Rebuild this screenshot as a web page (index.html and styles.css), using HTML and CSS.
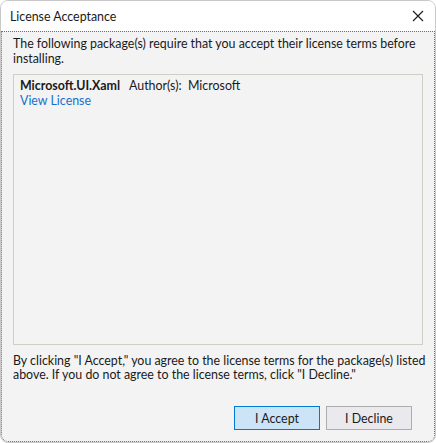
FILE: index.html
```html
<!DOCTYPE html>
<html>
<head>
<meta charset="utf-8">
<link rel="stylesheet" href="styles.css">
</head>
<body>
<div class="window">
  <div class="titlebar">
    <span class="title">License Acceptance</span>
    <svg class="close" width="12" height="12" viewBox="0 0 12 12"><path d="M1 1 L11 11 M11 1 L1 11" stroke="#1a1a1a" stroke-width="1.1" fill="none"/></svg>
  </div>
  <div class="content">
    <p class="intro">The following package(s) require that you accept their license terms before<br>installing.</p>
    <div class="packages">
      <div class="pkg">
        <div class="pkg-line"><span class="pkg-name">Microsoft.UI.Xaml</span><span class="pkg-author">Author(s):&nbsp; Microsoft</span></div>
        <a class="pkg-link" href="#">View License</a>
      </div>
    </div>
    <p class="notice">By clicking "I Accept," you agree to the license terms for the package(s) listed<br>above. If you do not agree to the license terms, click "I Decline."</p>
    <div class="buttons">
      <button class="btn btn-primary">I Accept</button>
      <button class="btn">I Decline</button>
    </div>
  </div>
</div>
</body>
</html>
```

FILE: styles.css
```css
html, body {
  margin: 0;
  padding: 0;
  background: #ffffff;
}
body {
  font-family: Lato, "Noto Sans", sans-serif;
  font-size: 12.4px;
  color: #1a1a1a;
}
.window {
  width: 436px;
  height: 443px;
  box-sizing: border-box;
  border: 1px solid #c9c9c9;
  border-radius: 8px;
  overflow: hidden;
  display: flex;
  flex-direction: column;
  background: #f3f3f3;
}
.titlebar {
  height: 30px;
  flex: none;
  background: #ffffff;
  display: flex;
  align-items: center;
  justify-content: space-between;
  padding: 0 11px 0 9px;
}
.title {
  color: #1a1a1a;
}
.close {
  display: block;
}
.content {
  flex: 1;
  border: 1px dotted #6e6e6e;
  border-radius: 0 0 7px 7px;
  padding: 4px 11px 11px 11px;
  display: flex;
  flex-direction: column;
}
.intro {
  margin: 0;
  line-height: 15px;
  white-space: nowrap;
}
.packages {
  margin-top: 8px;
  flex: 1;
  border: 1px solid #cfcfc7;
  padding: 3px 6px;
}
.pkg-line {
  line-height: 15px;
}
.pkg-name {
  font-weight: bold;
  margin-right: 9px;
}
.pkg-link {
  display: block;
  color: #1770c9;
  text-decoration: none;
  line-height: 15px;
}
.notice {
  margin: 9px 0 0 0;
  line-height: 14px;
  white-space: nowrap;
}
.buttons {
  display: flex;
  justify-content: flex-end;
  gap: 6px;
  margin-top: 24px;
  padding-right: 11px;
}
.btn {
  width: 86px;
  height: 24px;
  box-sizing: border-box;
  font-family: inherit;
  font-size: 12.4px;
  color: #1a1a1a;
  background: #eae9ee;
  border: 1px solid #adadad;
  padding: 0;
}
.btn-primary {
  background: #cce4f7;
  border-color: #0078d4;
}
```
